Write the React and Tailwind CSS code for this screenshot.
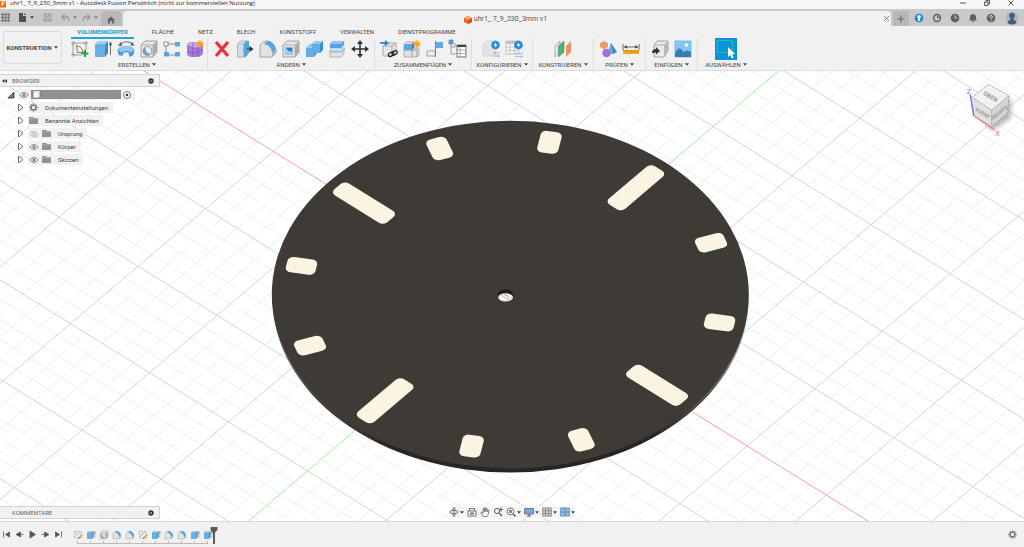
import React from "react";

const ORIGIN = [510.3, 298.7];
const U = [79, 49.1];
const V = [67.6, -57.4];

const at = (a, b) => [
  (ORIGIN[0] + a * U[0] + b * V[0]).toFixed(1),
  (ORIGIN[1] + a * U[1] + b * V[1]).toFixed(1),
];

function gridPath(major) {
  let d = "";
  for (let k = -50; k <= 50; k++) {
    if ((k % 5 === 0) !== major || k === 0) continue;
    const s = k / 5;
    d += `M${at(s, -12).join(" ")}L${at(s, 12).join(" ")}`;
    d += `M${at(-12, s).join(" ")}L${at(12, s).join(" ")}`;
  }
  return d;
}

function axisPath(alongU) {
  return alongU
    ? `M${at(-12, 0).join(" ")}L${at(12, 0).join(" ")}`
    : `M${at(0, -12).join(" ")}L${at(0, 12).join(" ")}`;
}

function Scene() {
  return (
    <svg
      className="block h-full w-full"
      viewBox="0 71 1024 450"
      preserveAspectRatio="xMidYMid slice"
      role="img"
      aria-label="3D-Modell Zifferblatt"
    >
      <defs>
        <linearGradient id="rim" x1="0" x2="1" y1="0" y2="0">
          <stop offset="0" stopColor="#8b8783" />
          <stop offset="0.08" stopColor="#4a4642" />
          <stop offset="0.25" stopColor="#2a2523" />
          <stop offset="0.8" stopColor="#2a2523" />
          <stop offset="0.93" stopColor="#5f5955" />
          <stop offset="1" stopColor="#a09c99" />
        </linearGradient>
      </defs>
      <path d={gridPath(false)} stroke="#efefef" strokeWidth="1" fill="none" />
      <path d={gridPath(true)} stroke="#d4d4d4" strokeWidth="1" fill="none" />
      <path d={axisPath(true)} stroke="#ff9c9c" strokeWidth="1" />
      <path d={axisPath(false)} stroke="#9cf29c" strokeWidth="1" />
      <ellipse cx="510.5" cy="298.5" rx="238" ry="174" fill="url(#rim)" />
      <ellipse cx="510.3" cy="294.6" rx="238.5" ry="173.8" fill="#3e3b36" />
      <g transform="matrix(79 49.1 67.6 -57.4 510.5 294.2)" fill="#faf4e3">
        {Array.from({ length: 12 }, (_, i) => {
          const long = i % 3 === 0;
          const len = long ? 0.67 : 0.29;
          return (
            <rect
              key={i}
              x={2.19 - len}
              y={-0.103}
              width={len}
              height={0.206}
              rx={0.057}
              transform={`rotate(${i * 30})`}
            />
          );
        })}
      </g>
      <ellipse cx="505.6" cy="295.4" rx="8" ry="6" fill="#1f1b19" />
      <ellipse cx="505.6" cy="297.4" rx="7.4" ry="4.2" fill="#f4f4f4" />
      <path d="M501 295l8 5" stroke="#e8aaaa" />
      <path d="M507 301l5-4" stroke="#9fd7ab" />
      <path d="M504 294l5 3" stroke="#999" />
    </svg>
  );
}

function Caret({ className = "" }) {
  return (
    <svg className={className} width="4" height="3" viewBox="0 0 4 3" aria-hidden="true">
      <path d="M0 .3h4L2 2.8z" fill="#444" />
    </svg>
  );
}

function Svg({ size = 20, box = 20, children }) {
  return (
    <svg width={size} height={size} viewBox={`0 0 ${box} ${box}`} fill="none" aria-hidden="true">
      {children}
    </svg>
  );
}

const SPARK = "M0-4.500l1 2.500 2.400-1.200L2.200-.8 4.500 0 2.200.9l1.200 2.300L1 2 0 4.500-1 2l-2.400 1.200L-2.200.9-4.500 0l2.300-.8-1.200-2.400L-1-2z";

function GrayBox() {
  return (
    <>
      <path d="M2 6l4-4h12v11l-4 5H2z" fill="#e4e4e4" stroke="#8f9296" strokeWidth=".8" />
      <path d="M14 6l4-4v11l-4 5z" fill="#a9adb1" />
      <path d="M2 6h12v12" stroke="#a7a9ac" strokeWidth=".8" />
    </>
  );
}

const ICONS = {
  sketch: (
    <>
      <path d="M3 4h13M3 4v12M16 4v7M3 16h9" stroke="#777" strokeWidth=".7" />
      <path d="M6.500 6.500l1 7h5.500q0-5-6.500-7z" stroke="#555" strokeWidth=".8" />
      {[[2, 3], [15, 3], [2, 15]].map(([x, y]) => (
        <rect key={`${x}-${y}`} x={x} y={y} width="2" height="2" fill="#fff" stroke="#666" strokeWidth=".6" />
      ))}
      <path d="M15 11v7M11.500 14.500h7" stroke="#27a443" strokeWidth="2.200" />
    </>
  ),
  extrude: (
    <>
      <path d="M2 5.500L5.500 2H15v12l-3 4H2z" fill="#4389c0" />
      <path d="M2 5.500h10V18H2z" fill="#67afe4" />
      <path d="M2 5.500L5.500 2H15l-3 3.500z" fill="#9bd0f4" />
      <path d="M17.500 16V4m-1.200 2l1.200-3 1.200 3z" stroke="#555" strokeWidth=".8" />
    </>
  ),
  revolve: (
    <>
      <path d="M1.500 10.500c4-5 13-5 17 0l-1 5.500-4 2-1-4c-2-1-3-1-5 0l-1 3-4-1z" fill="#4d9ad5" />
      <path d="M1.500 10.500c4-5 13-5 17 0l-4.500 3c-2-2-6-2-8 0z" fill="#91c9f0" />
      <path d="M4 5.500c4-3.500 9-3.500 13-.5" stroke="#555" strokeWidth=".9" />
      <path d="M5 3L2 6.500l4 .5zM16 3l2.500 3.500-4 0z" fill="#555" />
    </>
  ),
  hole: (
    <>
      <GrayBox />
      <circle cx="8.500" cy="12" r="4.300" fill="#5da5db" stroke="#777" strokeWidth=".8" />
      <path d="M7 8a4.500 4.500 0 0 0 5 6.500A4.500 4.500 0 0 0 7 8z" fill="#e7f2fa" />
    </>
  ),
  pattern: (
    <>
      <path d="M4 5h12M4 5v11h12" stroke="#777" strokeWidth=".8" />
      <rect x="2" y="3" width="4" height="4" fill="#fff" stroke="#777" strokeWidth=".8" />
      <rect x="13" y="3" width="5" height="4.500" fill="#58a7de" />
      <rect x="2" y="13" width="5" height="4.500" fill="#58a7de" />
      <rect x="13" y="13" width="5" height="4.500" fill="#58a7de" />
    </>
  ),
  form: (
    <>
      <path d="M2 7q0-3 3-4h9q4 1 4 4v7q-1 3-5 4H6q-4-1-4-4z" fill="#a77ae0" />
      <path d="M2 7q0-3 3-4h9q3 1 4 3l-5 3q-6 1-11-2z" fill="#c5a4f0" />
      <path d="M2 7q7 3 11 2l5-3M2.500 13q6 2 11 0l4-3M8 3q-1 7 0 15M13 9v8" stroke="#7d55b8" strokeWidth=".7" />
      <g transform="translate(15 5)"><path d={SPARK} fill="#f8a61c" /></g>
    </>
  ),
  delete: <path d="M4 3l12 14M16 3L4 17" stroke="#ee2e32" strokeWidth="3.200" />,
  press: (
    <>
      <path d="M2.500 5l3-3h8v12l-3 4h-8z" fill="#dadcde" stroke="#999" strokeWidth=".6" />
      <path d="M8.500 5l3-3H14v12l-3.500 4h-2z" fill="#57a5de" />
      <path d="M2.500 5h6v13h-6z" fill="#d2dde6" stroke="#8aa" strokeWidth=".5" />
      <path d="M12 10h5m-2-2l2.500 2-2.500 2z" stroke="#333" strokeWidth="1.200" />
    </>
  ),
  fillet: (
    <>
      <path d="M2 18V7q2-5 7-5 7 1 9 9v3l-4 4z" fill="#e2e3e4" stroke="#8f9296" strokeWidth=".8" />
      <path d="M6 5q2-3 5-3 6 2 7 9l-4 3q0-7-8-9z" fill="#57a5de" />
      <path d="M14 14l4-3v3l-4 4z" fill="#b1b4b7" />
    </>
  ),
  shell: (
    <>
      <GrayBox />
      <path d="M4.500 8.500h7v7h-7z" fill="#2c7fbe" />
      <path d="M4.500 8.500L8 12.500h3.500v3h-7z" fill="#9fd3f5" />
    </>
  ),
  combine: (
    <>
      <path d="M8 5l3-3h8v9l-3 3h-3l-3 4H2V9l3-3z" fill="#3f8dca" />
      <path d="M8 5h8v9h-6v4H2V9h6z" fill="#65aee3" />
      <path d="M8 5l3-3h8l-3 3zM2 9l3-3h3v3z" fill="#93cbf2" />
    </>
  ),
  split: (
    <>
      <path d="M3 5l3-3h11v4l-3 3H3z" fill="#57a5de" />
      <path d="M3 5l3-3h11l-3 3z" fill="#8fc9f1" />
      <path d="M3 13h11l3-3v4l-3 4H3z" fill="#e3e3e3" stroke="#999" strokeWidth=".7" />
      <path d="M2 12l3-3h13l-3 3z" fill="#dff0fb" stroke="#4c9cd5" strokeWidth=".6" />
    </>
  ),
  move: (
    <>
      <path d="M10 4v12M4 10h12" stroke="#333" strokeWidth="1.600" />
      <path d="M10 1l3 4H7zM10 19l3-4H7zM1 10l4-3v6zM19 10l-4-3v6z" fill="#333" />
    </>
  ),
  link: (
    <>
      <path d="M4 7l3-3h10v8l-4 5H4z" fill="#e7e7e7" stroke="#999" strokeWidth=".8" />
      <path d="M4 7h9v10M13 7l4-3" stroke="#999" strokeWidth=".8" />
      <path d="M1 4h6" stroke="#178ee0" strokeWidth="1.800" />
      <path d="M6 1l4 3-4 3z" fill="#178ee0" />
      <rect x="9" y="14" width="5.500" height="3.500" rx="1.700" stroke="#222" strokeWidth="1.300" transform="rotate(-28 11 15)" />
      <rect x="13" y="12" width="5.500" height="3.500" rx="1.700" stroke="#222" strokeWidth="1.300" transform="rotate(-28 16 14)" />
    </>
  ),
  component: (
    <>
      <path d="M2 5l2-2h8v6h5v7l-2 2H2z" fill="#e0e2e4" stroke="#999" strokeWidth=".7" />
      <path d="M2 5h8v6H2z" fill="#5ca9df" />
      <path d="M10 5l2-2v6l-2 2z" fill="#3984be" />
      <path d="M2 11h13v7M10 11v7" stroke="#8b8f93" strokeWidth=".8" />
      <g transform="translate(15 5)"><path d={SPARK} fill="#f8a61c" /></g>
    </>
  ),
  joint: (
    <>
      <path d="M2 12h8v5H2z" stroke="#999" strokeWidth=".9" />
      <path d="M11 3h7v6h-7z" fill="#62aae0" />
      <path d="M10.500 2v16" stroke="#e85a5a" strokeWidth="1" />
    </>
  ),
  bom: (
    <>
      <rect x="1" y="1" width="4" height="4" fill="#57a5de" stroke="#467" strokeWidth=".5" />
      <path d="M3 5v10h5M3 8h4M7 4v4" stroke="#888" strokeWidth=".8" />
      <rect x="9" y="6" width="9" height="12" fill="#fff" stroke="#555" strokeWidth=".8" />
      <path d="M9 7h9" stroke="#444" strokeWidth="2" />
      <path d="M9 11h9M9 14.500h9M12 8v10" stroke="#777" strokeWidth=".6" />
    </>
  ),
  configure: (
    <>
      <path d="M2 6l4-4h9v10l-3 5H2z" fill="#e4e4e4" stroke="#ccc" strokeWidth=".7" />
      <circle cx="14.500" cy="6" r="4.300" fill="#178ee0" />
      <path d="M15 3l-2.500 3.500h2L14 9l2.500-3.500h-2z" fill="#fff" />
      <path d="M12 14h7M12 17h7M14 12.500v3M17 15.500v3" stroke="#a9b7c2" strokeWidth="1" />
    </>
  ),
  table: (
    <>
      <rect x="2" y="2" width="13" height="13" fill="#f8f8f8" stroke="#bbb" strokeWidth=".8" />
      <path d="M2 3.500h13" stroke="#bbb" strokeWidth="2.500" />
      <path d="M2 8h13M2 11.500h13M6 5v10M10.500 5v10" stroke="#bbb" strokeWidth=".8" />
      <circle cx="14.500" cy="6" r="4.300" fill="#178ee0" />
      <path d="M15 3l-2.500 3.500h2L14 9l2.500-3.500h-2z" fill="#fff" />
      <path d="M11 14.500h8M11 17.500h8M13 13v3M17 16v3" stroke="#b5bec5" strokeWidth="1" />
    </>
  ),
  plane: (
    <>
      <path d="M2 7l5-5v11l-5 5z" fill="#e5e5e5" stroke="#999" strokeWidth=".7" />
      <path d="M5.500 7l5.500-5v11l-5.500 5z" fill="#4cb66f" stroke="#378e55" strokeWidth=".5" />
      <path d="M13 7l5-5v11l-5 5z" fill="#e79562" />
    </>
  ),
  inspect: (
    <>
      <path d="M13 4l6 9-4 2-5-1z" fill="#3a87c4" />
      <path d="M13 4l2 11-5-1z" fill="#6bb1e6" />
      <path d="M6 2l4 2v4l-4 2.500L2 8V4z" fill="#ee9c67" />
      <circle cx="8.500" cy="14" r="4.200" fill="#9d70dd" />
    </>
  ),
  measure: (
    <>
      <path d="M2 5v6M18 5v6M3 8h14" stroke="#555" strokeWidth=".9" />
      <path d="M3 8l3-1.800v3.600zM17 8l-3-1.800v3.600z" fill="#444" />
      <rect x="2" y="11" width="16" height="4" fill="#f5a815" />
      <path d="M4 11v2M6 11v2M8 11v2M10 11v2M12 11v2M14 11v2M16 11v2" stroke="#b56f00" strokeWidth=".5" />
    </>
  ),
  insert: (
    <>
      <path d="M4 6l3-4h11v10l-4 6H4z" fill="#e8e8e8" stroke="#8f9296" strokeWidth=".8" />
      <path d="M14 6l4-4v10l-4 6z" fill="#b5b8bb" />
      <path d="M4 6h10" stroke="#999" strokeWidth=".7" />
      <path d="M2 13q1-3 4-3V8l4 4-4 3.500v-2q-2 0-4 .5z" fill="#333" />
    </>
  ),
  image: (
    <>
      <rect x="2" y="2" width="16" height="16" fill="#83c6f7" stroke="#5ba5d9" strokeWidth=".6" />
      <path d="M2 14q3-6 6-4l3 3q3-3 7 0v5H2z" fill="#397dad" />
      <circle cx="13.500" cy="6" r="1.800" fill="#fff8c8" />
    </>
  ),
  select: (
    <>
      <rect width="22" height="22" fill="#0b93d8" />
      <rect x="2.500" y="2.500" width="15" height="12" stroke="#3fd98e" strokeWidth=".9" strokeDasharray="2 1.200" />
      <path d="M13 9v10l2.200-2 1.600 3.500 2-1-1.600-3.200 3-.3z" fill="#fff" />
    </>
  ),
};

const GROUPS = [
  { label: "ERSTELLEN", size: "min-w-[141px]", icons: [["sketch", "Skizze erstellen"], ["extrude", "Extrusion"], ["revolve", "Drehen"], ["hole", "Bohrung"], ["pattern", "Muster"], ["form", "Form erstellen"]] },
  { label: "ÄNDERN", size: "min-w-[167px]", icons: [["delete", "Löschen"], ["press", "Drücken/Ziehen"], ["fillet", "Abrunden"], ["shell", "Schale"], ["combine", "Kombinieren"], ["split", "Trennen"], ["move", "Verschieben"]] },
  { label: "ZUSAMMENFÜGEN", size: "min-w-[97px]", icons: [["link", "Verknüpfen"], ["component", "Neue Komponente"], ["joint", "Gelenk"], ["bom", "Stückliste"]] },
  { label: "KONFIGURIEREN", size: "min-w-[61px]", icons: [["configure", "Konfigurieren"], ["table", "Tabelle"]] },
  { label: "KONSTRUIEREN", size: "min-w-[61px]", icons: [["plane", "Versatzebene"]] },
  { label: "PRÜFEN", size: "min-w-[52px]", icons: [["inspect", "Prüfen"], ["measure", "Messen"]] },
  { label: "EINFÜGEN", size: "min-w-[52px]", icons: [["insert", "Einfügen"], ["image", "Bild"]] },
  { label: "AUSWÄHLEN", size: "min-w-[56px]", icons: [["select", "Auswählen"]] },
];

const TABS = ["VOLUMENKÖRPER", "FLÄCHE", "NETZ", "BLECH", "KUNSTSTOFF", "VERWALTEN", "DIENSTPROGRAMME"];

function TitleBar() {
  return (
    <div className="flex h-[9px] items-center bg-[#f6f6f6]">
      <svg width="7" height="8" viewBox="0 0 7 8" aria-hidden="true">
        <path d="M0 0h6v6.500H0z" fill="#f26a12" />
        <path d="M2 5V1h3M2 3h2" stroke="#fff" fill="none" />
      </svg>
      <h1 className="ml-[3px] mb-[3px] whitespace-nowrap font-['Open_Sans',sans-serif] text-[6px] leading-[8px] text-[#222]">
        uhr1_ 7_9_230_3mm v1 - Autodesk Fusion Persönlich (nicht zur kommerziellen Nutzung)
      </h1>
      <div className="mb-[3px] ml-auto mr-[10px] flex gap-[18px]">
        <button aria-label="Minimieren"><Svg size={6} box={6}><path d="M0 3h6" stroke="#333" strokeWidth=".8" /></Svg></button>
        <button aria-label="Wiederherstellen"><Svg size={6} box={6}><path d="M.5 2h3.500v3.500H.5zM2 2V.5h3.500V4H4" stroke="#333" strokeWidth=".8" /></Svg></button>
        <button aria-label="Schließen"><Svg size={6} box={6}><path d="M.5.5l5 5M5.500.5l-5 5" stroke="#333" strokeWidth=".8" /></Svg></button>
      </div>
    </div>
  );
}

function DocumentBar() {
  return (
    <div className="flex h-[17px] items-stretch bg-[#c9c9c9]">
      <div className="flex w-[101px] items-center pl-px">
        <button aria-label="Datenbereich"><Svg size={9} box={9}><path d="M.5.5h2v2h-2zM3.500.5h2v2h-2zM6.500.5h2v2h-2zM.5 3.500h2v2h-2zM3.500 3.500h2v2h-2zM6.500 3.500h2v2h-2zM.5 6.500h2v2h-2zM3.500 6.500h2v2h-2zM6.500 6.500h2v2h-2z" fill="#555" /></Svg></button>
        <button className="ml-[8px] flex items-center gap-[3px]" aria-label="Datei"><Svg size={9} box={9}><path d="M1 0h4v3h3v6H1zM6 0l2 2H6z" fill="#505050" /></Svg><Caret /></button>
        <button className="ml-[9px]" aria-label="Speichern"><Svg size={9} box={9}><path d="M1 1h7v7H1zM3 1v3h3V1M2.500 8V6h4v2" stroke="#999" /></Svg></button>
        <button className="ml-[9px] flex items-center gap-[3px] opacity-60" aria-label="Rückgängig"><Svg size={9} box={9}><path d="M4 1L1 4l3 3M1.500 4H5q3 0 3 4" stroke="#777" strokeWidth="1.300" /></Svg><Caret /></button>
        <button className="ml-[5px] flex items-center gap-[3px] opacity-60" aria-label="Wiederholen"><Svg size={9} box={9}><path d="M5 1l3 3-3 3M7.500 4H4Q1 4 1 8" stroke="#777" strokeWidth="1.300" /></Svg><Caret /></button>
      </div>
      <button className="mt-[2px] flex w-[20px] items-center justify-center rounded-t-sm bg-[#b8b8b8] pt-[2px]" aria-label="Startseite">
        <Svg size={8} box={8}><path d="M4 .5l4 3.500H7v3.500H5V5H3v2.500H1V4H0z" fill="#666" /></Svg>
      </button>
      <div className="ml-[2px] mt-[2px] flex flex-1 items-center rounded-t-sm bg-[#f1f1f1] pl-[5px] pr-px">
        <span className="flex flex-1 items-center justify-center gap-[2px] whitespace-nowrap pt-[2px] text-[7px] leading-[9px] text-[#555]">
          <Svg size={8} box={8}>
            <path d="M4 0l4 2v4L4 8 0 6V2z" fill="#e9661a" />
            <path d="M4 0l4 2-4 2-4-2z" fill="#ffa260" />
            <path d="M4 4l4-2v4L4 8z" fill="#d4530c" />
          </Svg>
          uhr1_ 7_9_230_3mm v1
        </span>
        <button aria-label="Tab schließen"><Svg size={7} box={7}><path d="M1 1l5 5M6 1L1 6" stroke="#777" strokeWidth=".9" /></Svg></button>
      </div>
      <button className="ml-[2px] mt-[2px] flex w-[16px] items-center justify-center bg-[#b8b8b8]" aria-label="Neuer Tab"><Svg size={8} box={8}><path d="M4 .5v7M.5 4h7" stroke="#666" strokeWidth="1.200" /></Svg></button>
      <div className="flex items-center gap-[8px] pl-[5px] pr-[5px]">
        <button aria-label="Erweiterungen"><Svg size={10} box={10}><circle cx="5" cy="5" r="4.300" fill="#178ee0" /><path d="M5 2a2 2 0 0 0-1 3.600V8h2V5.600A2 2 0 0 0 5 2z" fill="#fff" /></Svg></button>
        <button aria-label="Synchronisieren"><Svg size={10} box={10}><circle cx="5" cy="5" r="3.400" stroke="#606060" strokeWidth="1.500" /><path d="M5 5V2.500L8 5z" fill="#606060" /></Svg></button>
        <button aria-label="Auftragsstatus"><Svg size={10} box={10}><circle cx="5" cy="5" r="4.300" fill="#606060" /><path d="M5 2v3h2.500" stroke="#ddd" strokeWidth=".9" /></Svg></button>
        <button aria-label="Benachrichtigungen"><Svg size={10} box={10}><path d="M1 7.500l1-1.500V4q0-2.500 3-3 3 .5 3 3v2l1 1.500zM4 8h2v1H4z" fill="#606060" /></Svg></button>
        <button aria-label="Hilfe"><Svg size={10} box={10}><circle cx="5" cy="5" r="4.300" fill="#606060" /><path d="M3.500 4q0-1.500 1.500-1.500T6.500 4Q6.500 5 5 5.200V6M5 6.800v1" stroke="#eee" strokeWidth=".9" /></Svg></button>
        <button className="ml-px" aria-label="Konto"><Svg size={14} box={14}><circle cx="7" cy="7" r="6.500" fill="#a8b8cb" /><path d="M2.500 12q.5-3 3-3V8Q3.500 5 4.500 3 7 .5 9.500 3q1 2-1 5v1q2.500 0 3 3Q7 15 2.500 12z" fill="#4a5a70" /></Svg></button>
      </div>
    </div>
  );
}

function Ribbon() {
  return (
    <div className="flex h-[45px] border-b border-[#dcdcdc] bg-[#f1f1f1]">
      <button className="mb-[6px] ml-[3px] mr-[5px] mt-[5px] flex w-[59px] items-center justify-center gap-[3px] rounded-[3px] border border-[#dadada] text-[6px] font-bold text-[#444]">
        KONSTRUKTION <Caret />
      </button>
      <div>
        <nav className="flex gap-[12px] pl-[4px]">
          {TABS.map((t, i) => (
            <button
              key={t}
              className={
                i === 0
                  ? "h-[13px] border-b-2 border-[#2ba0da] px-[6px] text-[6px] font-bold leading-[11px] text-[#2a98d0]"
                  : "h-[13px] border-b-2 border-transparent px-[6px] text-[6px] leading-[11px] text-[#444]"
              }
            >
              {t}
            </button>
          ))}
        </nav>
        <div className="flex">
          {GROUPS.map((g, i) => (
            <div
              key={g.label}
              className={`flex flex-col items-center ${g.size} ${i < GROUPS.length - 1 ? "border-r border-[#dedede]" : ""}`}
            >
              <div className="flex h-[20px] items-center">
                {g.icons.map(([name, title]) => (
                  <button key={name} aria-label={title} className="flex w-[23px] justify-center">
                    {name === "select" ? <Svg size={22} box={22}>{ICONS[name]}</Svg> : <Svg>{ICONS[name]}</Svg>}
                  </button>
                ))}
              </div>
              <button className="flex h-[11px] items-center gap-[2px] whitespace-nowrap text-[6px] text-[#444]">
                {g.label} <Caret />
              </button>
            </div>
          ))}
        </div>
      </div>
    </div>
  );
}

function Twisty() {
  return <Svg size={7} box={7}><path d="M1.500.5v6h1L6 3.500 2.500.5z" stroke="#555" strokeWidth=".9" fill="#fff" /></Svg>;
}

function Eye({ hidden }) {
  return (
    <svg width="10" height="8" viewBox="0 0 10 8" fill="none" aria-hidden="true">
      <path d="M.7 4q4.300-5 8.600 0Q5 9 .7 4z" stroke={hidden ? "#bbb" : "#8a8a8a"} strokeWidth="1" />
      <circle cx="5" cy="4" r="1.700" fill={hidden ? "#ccc" : "#8a8a8a"} />
      {hidden && <path d="M2 1l6 6" stroke="#bbb" />}
    </svg>
  );
}

function Folder() {
  return <Svg size={9} box={9}><path d="M0 1h4l1 1h4v6H0z" fill="#929292" /><path d="M0 2.700h9" stroke="#c8c8c8" strokeWidth=".5" /></Svg>;
}

function Gear({ size = 9 }) {
  return (
    <Svg size={size} box={10}>
      <circle cx="5" cy="5" r="2.600" stroke="#777" strokeWidth="1.500" />
      <path d="M5 .3v1.800M5 7.900v1.800M.3 5h1.800M7.900 5h1.800M1.700 1.700L3 3M7 7l1.300 1.300M1.700 8.300L3 7M7 3l1.300-1.300" stroke="#777" strokeWidth="1.400" />
    </Svg>
  );
}

const TREE = [
  { label: "Dokumenteinstellungen", icon: "gear" },
  { label: "Benannte Ansichten" },
  { label: "Ursprung", eye: true, hidden: true },
  { label: "Körper", eye: true },
  { label: "Skizzen", eye: true },
];

function PanelHeader({ title, arrows }) {
  return (
    <div className="flex h-[13px] w-[160px] items-center border border-l-0 border-[#d3d3d3] bg-[#f1f1f1] pl-[2px] pr-[5px] text-[6px] text-[#666]">
      <span className="flex w-[10px]">
        {arrows && <svg width="5" height="4" viewBox="0 0 5 4" aria-hidden="true"><path d="M2.400 0v4L0 2zM5 0v4L2.600 2z" fill="#333" /></svg>}
      </span>
      <h2 className="flex-1">{title}</h2>
      <button aria-label={`${title} umschalten`}>
        <Svg size={6} box={6}>
          <circle cx="3" cy="3" r="2.700" fill="#333" />
          <path d={arrows ? "M1.500 3h3" : "M2 3h2M3 2v2"} stroke="#ddd" strokeWidth=".7" />
        </Svg>
      </button>
    </div>
  );
}

function Browser() {
  return (
    <section className="absolute left-0 top-[3px] text-[6px] text-[#444]">
      <PanelHeader title="BROWSER" arrows />
      <div className="mt-px flex h-[13px] items-center pl-[7px]">
        <button aria-label="Reduzieren"><Svg size={8} box={8}><path d="M7 1v6H1z" fill="#777" stroke="#333" strokeWidth=".8" /></Svg></button>
        <div className="ml-[3px] flex h-[11px] items-center gap-[2px] bg-[#f1f1f1] pl-px pr-[4px]">
          <button aria-label="Sichtbarkeit"><Eye /></button>
          <span className="flex h-[9px] w-[90px] items-center bg-[#919191] pl-px">
            <Svg size={9} box={9}><path d="M1 2l1.500-1.500H8V6L7 8H1z" fill="#f7f7f7" stroke="#667" strokeWidth=".6" /><path d="M1 2h6v6" stroke="#bbc" strokeWidth=".5" /></Svg>
          </span>
          <button aria-label="Aktivieren"><Svg size={8} box={8}><circle cx="4" cy="4" r="3.400" stroke="#555" strokeWidth=".8" fill="#fff" /><circle cx="4" cy="4" r="1.300" fill="#333" /></Svg></button>
        </div>
      </div>
      <ul>
        {TREE.map((n) => (
          <li key={n.label} className="flex h-[13px] items-center gap-[4px] pl-[17px]">
            <button aria-label={`${n.label} erweitern`}><Twisty /></button>
            <span className="flex h-[11px] items-center bg-[#f1f1f1] pl-px pr-[5px]">
              {n.eye && <button className="mr-[3px]" aria-label={`${n.label} ein-/ausblenden`}><Eye hidden={n.hidden} /></button>}
              {n.icon ? <Gear /> : <Folder />}
              <span className="ml-[7px]">{n.label}</span>
            </span>
          </li>
        ))}
      </ul>
    </section>
  );
}

function ViewCube() {
  return (
    <svg className="absolute right-[8px] top-[5px]" width="56" height="64" viewBox="960 76 56 64" role="img" aria-label="ViewCube">
      <defs>
        <filter id="soft" x="-30%" y="-30%" width="160%" height="160%"><feGaussianBlur stdDeviation="2" /></filter>
      </defs>
      <path d="M975 112l17 19 19-13V98z" fill="#999" opacity=".7" filter="url(#soft)" />
      <path d="M988.300 84.300l20.700 11.400-17.300 14.300-19.700-12.700z" fill="#f2f2f2" />
      <path d="M972 97.300l19.700 12.700v16.700l-18-11z" fill="#e0e0e0" />
      <path d="M991.700 110L1009 95.700l-1.700 17.600-15.600 13.400z" fill="#d6d6d6" />
      <path d="M988.300 84.300l20.700 11.400-17.300 14.300-19.700-12.700zM991.700 110v16.700M1009 95.700l-1.700 17.600-15.600 13.400-18-11" fill="none" stroke="#999" strokeWidth=".8" strokeDasharray="3 1" />
      <g fill="#999" fontSize="6" fontWeight="700" textAnchor="middle">
        <text transform="translate(989.500 98.500) rotate(30)">OBEN</text>
        <text fontSize="5" transform="translate(981.500 114.500) rotate(32)">VORNE</text>
        <text fontSize="5" transform="translate(1000.500 114) rotate(-40)">RECHTS</text>
      </g>
      <path d="M973.700 115.700l-3.400-21" stroke="#6a6af0" strokeWidth="1.400" />
      <path d="M973.700 115.700l21 14.300" stroke="#f08080" strokeWidth="1.200" />
      <text x="966.500" y="93.500" fontSize="8" fill="#7a7af5">Z</text>
      <text x="995" y="135.500" fontSize="8" fill="#ff7070">X</text>
    </svg>
  );
}

const NAV = [
  { t: "Orbit", c: true, d: <><ellipse cx="5" cy="5" rx="4.300" ry="1.600" stroke="#666" strokeWidth=".9" /><path d="M5 1v8M3.500 2.500L5 .5l1.500 2M3.500 7.500L5 9.500l1.500-2" stroke="#666" strokeWidth=".9" /></> },
  { t: "Ansicht nach", d: <><path d="M1 4h8v5H1zM2.500 4V1.500h5V4" stroke="#666" strokeWidth=".9" /><path d="M3 5.500h4v2H3z" fill="#777" /></> },
  { t: "Pan", d: <path d="M3 9L.8 5.500l1-.5L3 6.500V2l1-.3.4 3V.8h1l.3 3.900L6.300 1.500l1 .2V5l1-2 .8.300L8 8 7 9.500H3.500z" fill="#fff" stroke="#555" strokeWidth=".7" /> },
  { t: "Zoom", d: <><circle cx="4" cy="4" r="2.600" stroke="#555" strokeWidth=".9" /><path d="M6 6l3 3M8 .5v4M6.500 2.500h3" stroke="#555" strokeWidth="1.100" /></> },
  { t: "Einpassen", c: true, d: <><circle cx="4.500" cy="4.500" r="3.400" stroke="#666" strokeWidth=".9" /><path d="M3 3h3v3H3z" fill="#888" /><path d="M7 7l2.500 2.500" stroke="#555" strokeWidth="1.200" /></> },
  { t: "Anzeigeeinstellungen", c: true, d: <><path d="M.5 1.500h9v5.500h-9z" fill="#70aadd" stroke="#667" strokeWidth=".8" /><path d="M3 9h4M5 7v2" stroke="#555" /></> },
  { t: "Raster", c: true, d: <path d="M.7 1h8.600v8H.7zM3.500 1v8M6.500 1v8M.7 3.700h8.600M.7 6.400h8.600" fill="#ddd" stroke="#777" strokeWidth=".8" /> },
  { t: "Ansichtsfenster", c: true, d: <path d="M.7 1h8.600v8H.7zM5 1v8M.7 5h8.600" fill="#92bfe7" stroke="#5880a8" strokeWidth=".8" /> },
];

function NavBar() {
  return (
    <div className="absolute inset-x-0 bottom-[3px] flex justify-center">
      <div className="flex h-[12px] items-center gap-[3px] bg-[#f4f4f4]">
        {NAV.map((n) => (
          <button key={n.t} aria-label={n.t} className="flex items-center gap-px">
            <Svg size={10} box={10}>{n.d}</Svg>
            {n.c && <Caret />}
          </button>
        ))}
      </div>
    </div>
  );
}

const PLAYBACK = [
  ["Zum Anfang", "M1.500 1.500v6M7.500 2L3.500 4.500l4 2.500z"],
  ["Zurück", "M5.500 2L1 4.500 5.500 7zM6 4.500h2.500"],
  ["Wiedergabe", "M2 1v7l5.500-3.500z"],
  ["Vor", "M3.500 2L8 4.500 3.500 7zM3 4.500H.5"],
  ["Zum Ende", "M7.500 1.500v6M1.500 2l4 2.500-4 2.500z"],
];

const FEATURES = ["sk", "extrude", "hole", "fillet", "fillet", "sk", "extrude", "fillet", "fillet", "extrude", "extrude"];

function Timeline() {
  return (
    <footer className="flex h-[26px] items-start border-t border-[#d6d6d6] bg-[#f1f1f1] pt-[6px]">
      <div className="flex h-[13px] items-center">
        {PLAYBACK.map(([t, d]) => (
          <button key={t} aria-label={t} className="flex w-[13px] justify-center">
            <Svg size={9} box={9}><path d={d} fill="#555" stroke="#555" strokeWidth=".8" /></Svg>
          </button>
        ))}
      </div>
      <div className="ml-[6px]">
        <div className="flex h-[13px] items-center">
          {FEATURES.map((f, i) => (
            <button key={i} aria-label={`Feature ${i + 1}`} className="flex w-[13px] justify-center">
              <Svg size={10}>
                {f === "sk" ? (
                  <>
                    <path d="M3 3h13v13H3z" stroke="#69a5d5" strokeWidth="1.500" strokeDasharray="3 1.500" />
                    <path d="M6 13q0-6 7-7" stroke="#777" />
                    <path d="M10 18l1-4 7-6 2 2-7 7z" fill="#f3a13c" />
                    <path d="M10 18l1-3 2 2z" fill="#d33" />
                  </>
                ) : (
                  ICONS[f]
                )}
              </Svg>
            </button>
          ))}
        </div>
        <div className="mx-[6px] flex h-[3px] justify-between border-b border-[#bbb]">
          {FEATURES.map((f, i) => <span key={i} className="w-px bg-[#bbb]" />)}
        </div>
      </div>
      <svg className="-ml-[4px] -mt-px" width="8" height="18" viewBox="0 0 8 18" aria-hidden="true">
        <path d="M.5 0h7v3L5 5.500V17H3V5.500L.5 3z" fill="#5c5c5c" />
      </svg>
      <button className="ml-auto mr-[7px] mt-[2px]" aria-label="Einstellungen"><Gear /></button>
    </footer>
  );
}

export default function App() {
  return (
    <div className="flex h-screen flex-col overflow-hidden bg-white font-['Roboto',sans-serif] text-[#444]">
      <header className="shrink-0">
        <TitleBar />
        <DocumentBar />
        <Ribbon />
      </header>
      <main className="relative min-h-0 flex-1 overflow-hidden">
        <Scene />
        <Browser />
        <ViewCube />
        <NavBar />
        <section className="absolute bottom-[2px] left-0"><PanelHeader title="KOMMENTARE" /></section>
      </main>
      <Timeline />
    </div>
  );
}
